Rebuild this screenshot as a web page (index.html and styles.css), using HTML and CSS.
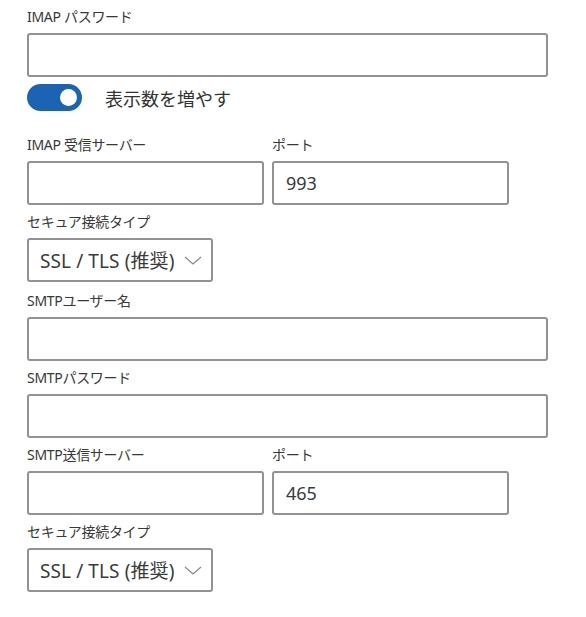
FILE: index.html
```html
<!DOCTYPE html>
<html lang="ja">
<head>
<meta charset="utf-8">
<link rel="stylesheet" href="styles.css">
</head>
<body>
<form class="form">
  <div class="field">
    <label class="label">IMAP パスワード</label>
    <input class="input" type="password">
  </div>
  <div class="toggle-row">
    <span class="toggle"><span class="knob"></span></span>
    <span class="toggle-text">表示数を増やす</span>
  </div>
  <div class="row first-after-toggle">
    <div class="field half">
      <label class="label">IMAP 受信サーバー</label>
      <input class="input" type="text">
    </div>
    <div class="field half">
      <label class="label">ポート</label>
      <input class="input" type="text" value="993">
    </div>
  </div>
  <div class="field">
    <label class="label">セキュア接続タイプ</label>
    <div class="select">
      <span>SSL / TLS (推奨)</span>
      <svg class="chev" width="18" height="9" viewBox="0 0 18 9"><path d="M1 1 L9 8 L17 1" fill="none" stroke="#8a8a8a" stroke-width="1.3"/></svg>
    </div>
  </div>
  <div class="field smtp-start">
    <label class="label">SMTPユーザー名</label>
    <input class="input" type="text">
  </div>
  <div class="field">
    <label class="label">SMTPパスワード</label>
    <input class="input" type="password">
  </div>
  <div class="row">
    <div class="field half">
      <label class="label">SMTP送信サーバー</label>
      <input class="input" type="text">
    </div>
    <div class="field half">
      <label class="label">ポート</label>
      <input class="input" type="text" value="465">
    </div>
  </div>
  <div class="field">
    <label class="label">セキュア接続タイプ</label>
    <div class="select">
      <span>SSL / TLS (推奨)</span>
      <svg class="chev" width="18" height="9" viewBox="0 0 18 9"><path d="M1 1 L9 8 L17 1" fill="none" stroke="#8a8a8a" stroke-width="1.3"/></svg>
    </div>
  </div>
</form>
</body>
</html>
```

FILE: styles.css
```css
html, body {
  margin: 0;
  padding: 0;
  background: #ffffff;
}
body {
  font-family: "Noto Sans", "Noto Sans CJK JP", sans-serif;
  color: #333333;
}
.form {
  display: flex;
  flex-direction: column;
  gap: 7px;
  padding: 7px 0 0 27px;
  width: 521px;
}
.field {
  display: flex;
  flex-direction: column;
}
.smtp-start {
  margin-top: 2px;
}
.label {
  font-size: 14px;
  line-height: 20px;
  margin-bottom: 6px;
  color: #383838;
  letter-spacing: -0.3px;
}
.input {
  box-sizing: border-box;
  height: 44px;
  width: 100%;
  border: 2px solid #929292;
  border-radius: 3px;
  padding: 0 12px;
  font: inherit;
  font-size: 18px;
  color: #3a3a3a;
  background: #fff;
  outline: none;
}
.row {
  display: flex;
  gap: 8px;
  width: 482px;
}
.half {
  flex: 1;
}
.first-after-toggle {
  margin-top: 17px;
}
.toggle-row {
  display: flex;
  align-items: center;
  gap: 23px;
  height: 27px;
}
.toggle {
  box-sizing: border-box;
  width: 55px;
  height: 27px;
  border-radius: 14px;
  background: #1b63b3;
  display: flex;
  align-items: center;
  justify-content: flex-end;
  padding-right: 5px;
}
.knob {
  width: 17px;
  height: 17px;
  border-radius: 50%;
  background: #ffffff;
}
.toggle-text {
  font-size: 18px;
  color: #333333;
}
.select {
  box-sizing: border-box;
  width: 186px;
  height: 44px;
  border: 2px solid #929292;
  border-radius: 3px;
  display: flex;
  align-items: center;
  justify-content: space-between;
  padding: 0 9px 0 11px;
  font-size: 19px;
  letter-spacing: 0.1px;
  color: #3a3a3a;
}
.chev {
  display: block;
}
```
